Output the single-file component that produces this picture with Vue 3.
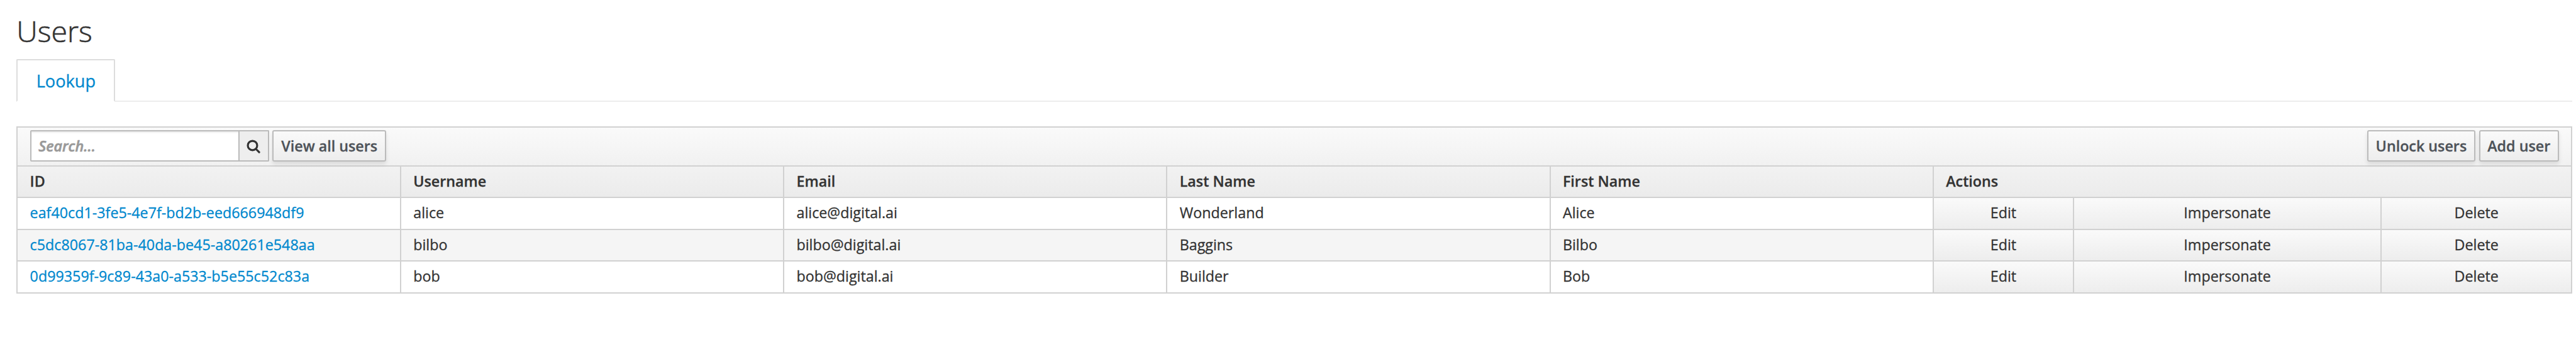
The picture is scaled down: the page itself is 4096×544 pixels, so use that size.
<script setup>
const columns = ['ID', 'Username', 'Email', 'Last Name', 'First Name']
const actions = ['Edit', 'Impersonate', 'Delete']
const users = [
  { id: 'eaf40cd1-3fe5-4e7f-bd2b-eed666948df9', username: 'alice', email: 'alice@digital.ai', last: 'Wonderland', first: 'Alice' },
  { id: 'c5dc8067-81ba-40da-be45-a80261e548aa', username: 'bilbo', email: 'bilbo@digital.ai', last: 'Baggins', first: 'Bilbo' },
  { id: '0d99359f-9c89-43a0-a533-b5e55c52c83a', username: 'bob', email: 'bob@digital.ai', last: 'Builder', first: 'Bob' },
]
</script>

<template>
  <main class="page">
    <h1 class="title">Users</h1>
    <nav class="tabs"><a class="tab">Lookup</a></nav>

    <section class="grid">
      <div class="toolbar">
        <div class="search">
          <input class="field" type="text" placeholder="Search..." />
          <button class="go" aria-label="Search">
            <svg viewBox="0 0 24 24" fill="none" stroke="#333" stroke-linecap="round">
              <circle cx="10.2" cy="10.2" r="8" stroke-width="3.4" />
              <path d="M16.4 16.4L21.6 21.6" stroke-width="3.4" />
            </svg>
          </button>
        </div>
        <button class="btn view">View all users</button>
        <span class="spacer"></span>
        <button class="btn unlock">Unlock users</button>
        <button class="btn add">Add user</button>
      </div>

      <div class="row head">
        <div v-for="c in columns" :key="c" class="cell">{{ c }}</div>
        <div class="cell wide">Actions</div>
      </div>
      <div v-for="(u, i) in users" :key="u.id" class="row body" :class="{ striped: i % 2 === 1 }">
        <div class="cell"><a class="link">{{ u.id }}</a></div>
        <div class="cell">{{ u.username }}</div>
        <div class="cell">{{ u.email }}</div>
        <div class="cell">{{ u.last }}</div>
        <div class="cell">{{ u.first }}</div>
        <div v-for="a in actions" :key="a" class="cell action">{{ a }}</div>
      </div>
    </section>
  </main>
</template>

<style>
html, body { margin: 0; background: #fff; overflow: hidden; }
</style>

<style scoped>
.page, .page * { box-sizing: border-box; }
.page {
  --u: calc(100vw / 4220);
  height: 100vh;
  padding-left: calc(27 * var(--u));
  padding-right: calc(6 * var(--u));
  font-family: "Open Sans", "Noto Sans", sans-serif;
  font-size: calc(24 * var(--u));
  color: #333;
  -webkit-text-stroke: 0.3px currentColor;
  overflow: hidden;
}
.title {
  margin: 0;
  height: calc(97 * var(--u));
  padding-top: calc(20.5 * var(--u));
  font-size: calc(48 * var(--u));
  line-height: calc(60 * var(--u));
  font-weight: 300;
  -webkit-text-stroke-width: 0.6px;
}
.tabs {
  display: flex;
  height: calc(70 * var(--u));
  border-bottom: 2px solid #ededed;
}
.tab {
  width: calc(162 * var(--u));
  height: calc(70 * var(--u));
  border: 2px solid #ddd;
  border-bottom-color: #fff;
  border-radius: 2px 2px 0 0;
  background: #fff;
  color: #0088ce;
  font-size: calc(28 * var(--u));
  line-height: calc(68 * var(--u));
  text-align: center;
}
.grid {
  margin-top: calc(40 * var(--u));
  border: 2px solid #d1d1d1;
  border-bottom: 0;
}
.toolbar {
  display: flex;
  height: calc(64 * var(--u));
  padding: calc(4 * var(--u)) calc(20 * var(--u)) 0 calc(20 * var(--u));
  border-bottom: 2px solid #d1d1d1;
  background: linear-gradient(#fafafa, #f1f1f1);
}
.search { display: flex; width: calc(391.5 * var(--u)); height: calc(52 * var(--u)); }
.field {
  width: calc(343.5 * var(--u));
  height: 100%;
  margin: 0;
  padding: 0 calc(12 * var(--u));
  border: 2px solid #bbb;
  border-radius: 2px 0 0 2px;
  background: #fff;
  box-shadow: inset 0 2px 2px rgba(0, 0, 0, 0.075);
  font: italic 600 calc(24 * var(--u)) "Open Sans", "Noto Sans", sans-serif;
}
.field::placeholder {
  color: #999;
  opacity: 1;
  font-style: italic;
  font-weight: 600;
  -webkit-text-stroke: 0.6px #999;
}
.go {
  display: flex;
  align-items: center;
  justify-content: center;
  flex: 1;
  margin: 0;
  padding: 0;
  border: 2px solid #bbb;
  border-left: 0;
  border-radius: 0 2px 2px 0;
  background: #eee;
}
.go svg { width: calc(23 * var(--u)); height: calc(23 * var(--u)); margin-top: calc(2 * var(--u)); }
.btn {
  height: calc(52 * var(--u));
  margin: 0 0 0 calc(6 * var(--u));
  padding: 0;
  border: 2px solid #bbb;
  border-radius: 3px;
  background: linear-gradient(#fafafa, #ededed);
  box-shadow: 0 4px 6px rgba(3, 3, 3, 0.1);
  color: #4d5258;
  font: inherit;
  font-weight: 600;
  -webkit-text-stroke: 0.3px currentColor;
  white-space: nowrap;
}
.view { width: calc(186 * var(--u)); }
.unlock { width: calc(177 * var(--u)); }
.add { width: calc(131 * var(--u)); }
.spacer { flex: 1; }
.row {
  display: grid;
  height: calc(52 * var(--u));
  border-bottom: 2px solid #d1d1d1;
}
.head {
  grid-template-columns: calc(626 * var(--u)) repeat(4, calc(627.7 * var(--u))) 1fr;
  background: linear-gradient(#f2f2f2, #ebebeb);
  font-weight: 600;
}
.body {
  grid-template-columns: calc(626 * var(--u)) repeat(4, calc(627.7 * var(--u))) calc(230 * var(--u)) calc(504 * var(--u)) 1fr;
}
.striped { background: #f5f5f5; }
.cell {
  padding: 0 calc(20 * var(--u));
  border-left: 2px solid #d1d1d1;
  line-height: calc(49 * var(--u));
  white-space: nowrap;
}
.cell:first-child { border-left: 0; }
.link { color: #0088ce; }
.action {
  background: linear-gradient(#fafafa, #ededed);
  text-align: center;
}
</style>
